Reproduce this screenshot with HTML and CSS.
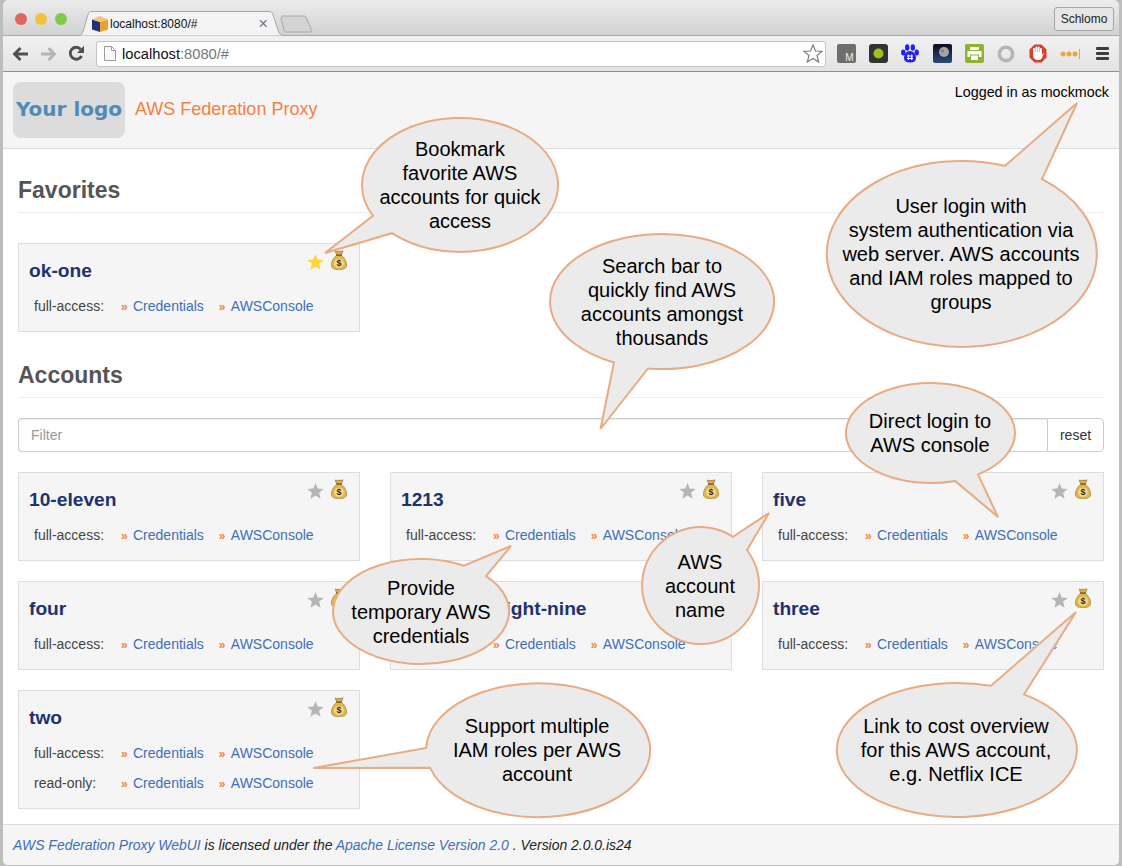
FILE: index.html
```html
<!DOCTYPE html>
<html>

<head>
    <meta charset="UTF-8">
    <title>AWS Federation Proxy</title>
    <link rel="stylesheet" href="styles.css">
</head>

<body>
    <svg class="defs" width="0" height="0">
        <symbol id="star" viewBox="0 0 20 19">
            <polygon points="10,0 12.6,6.6 19.8,7 14.2,11.6 16.1,18.7 10,14.7 3.9,18.7 5.8,11.6 0.2,7 7.4,6.6" />
        </symbol>
        <symbol id="bag" viewBox="0 0 16 20">
            <path d="M4.2 1 C5.6 1.9 6.6 1 8 1.5 C9.4 1 10.6 1.8 12 .8 L10.4 5 L5.6 5 Z" fill="#dcae45" stroke="#8a6a24" stroke-width=".6" />
            <path d="M5.4 5.4 L10.6 5.4 C13.6 8 15.6 11.6 15.6 15 C15.6 18.6 12.6 19.6 8 19.6 C3.4 19.6 .4 18.6 .4 15 C.4 11.6 2.4 8 5.4 5.4 Z" fill="#e3b64c" stroke="#94742a" stroke-width=".6" />
            <rect x="5" y="4.4" width="6" height="1.4" rx=".7" fill="#7a5a1e" />
            <ellipse cx="8" cy="13.2" rx="4.8" ry="4.5" fill="#f0dc94" />
            <text x="8" y="16.4" class="bag-sign">$</text>
        </symbol>
    </svg>

    <div class="window">
        <div class="titlebar">
            <div class="lights">
                <span class="light light-red"></span>
                <span class="light light-yellow"></span>
                <span class="light light-green"></span>
            </div>
            <div class="tab">
                <svg class="tab-shape" width="207" height="25" viewBox="0 0 207 25">
                    <path d="M0 24.5 C4 24.5 4.5 22 5.5 19 L10 3.5 C10.6 1.5 12 .5 14 .5 L191 .5 C193 .5 194.4 1.5 195 3.5 L200 19 C201 22 202 24.5 206.5 24.5" fill="#f3f3f3" stroke="#a6a6a6" />
                </svg>
                <svg class="favicon" width="16" height="16" viewBox="0 0 16 16">
                    <path d="M0 3.5 L8 6 L8 16 L0 13.5 Z" fill="#1f3474" />
                    <path d="M8 6 L16 3.5 L16 13.5 L8 16 Z" fill="#eba02a" />
                    <path d="M0 3.5 L8 0 L16 3.5 L8 6 Z" fill="#f4c27a" />
                </svg>
                <span class="tab-title">localhost:8080/#</span>
                <span class="tab-close">×</span>
            </div>
            <svg class="new-tab" width="33" height="18" viewBox="0 0 33 18">
                <path d="M1 3 C1 1.5 2 1 3 1 L24 1 C25.5 1 26 1.5 26.5 3 L31.5 15 C32 16.5 31 17 30 17 L6 17 C5 17 4.5 16.5 4 15.5 Z" fill="#d3d3d3" stroke="#a9a9a9" />
            </svg>
            <button class="profile">Schlomo</button>
        </div>

        <div class="toolbar">
            <div class="nav">
                <svg class="nav-icon" width="18" height="16" viewBox="0 0 18 16">
                    <path d="M16 8 L3 8 M8.5 2 L2.5 8 L8.5 14" fill="none" stroke="#4f4f4f" stroke-width="2.8" />
                </svg>
                <svg class="nav-icon" width="18" height="16" viewBox="0 0 18 16">
                    <path d="M2 8 L15 8 M9.5 2 L15.5 8 L9.5 14" fill="none" stroke="#b4b4b4" stroke-width="2.8" />
                </svg>
                <svg class="nav-icon" width="17" height="17" viewBox="0 0 17 17">
                    <path d="M13.6 11 A6 6 0 1 1 12.8 4.3" fill="none" stroke="#4f4f4f" stroke-width="2.8" />
                    <polygon points="16,.8 16,8 9,8" fill="#4f4f4f" />
                </svg>
            </div>
            <div class="omnibox">
                <svg class="page-icon" width="12" height="15" viewBox="0 0 12 15">
                    <path d="M.5 .5 L7.5 .5 L11.5 4.5 L11.5 14.5 L.5 14.5 Z M7.5 .5 L7.5 4.5 L11.5 4.5" fill="#fafafa" stroke="#9a9a9a" />
                </svg>
                <span class="url"><span class="url-host">localhost</span>:8080/#</span>
                <svg class="bookmark" width="20" height="19" viewBox="0 0 20 19">
                    <polygon points="10,1 12.5,7 19,7.4 14,11.5 15.7,18 10,14.4 4.3,18 6,11.5 1,7.4 7.5,7" fill="#fff" stroke="#7c7c7c" stroke-width="1.2" />
                </svg>
            </div>
            <div class="extensions">
                <span class="ext">
                    <svg width="19" height="19" viewBox="0 0 19 19">
                        <rect width="19" height="19" rx="2" fill="#6e6e6e" />
                        <text x="12.5" y="17" class="ext-m">M</text>
                    </svg>
                </span>
                <span class="ext">
                    <svg width="19" height="19" viewBox="0 0 19 19">
                        <rect width="19" height="19" rx="3" fill="#333" />
                        <circle cx="9.5" cy="9.5" r="5" fill="#9ac31c" />
                    </svg>
                </span>
                <span class="ext">
                    <svg width="18" height="19" viewBox="0 0 18 19" fill="#2222f0">
                        <ellipse cx="2.3" cy="8.5" rx="2.2" ry="3" />
                        <ellipse cx="6.2" cy="3.5" rx="2.2" ry="3.3" />
                        <ellipse cx="11.8" cy="3.5" rx="2.2" ry="3.3" />
                        <ellipse cx="15.7" cy="8.5" rx="2.2" ry="3" />
                        <path d="M9 7 C12.5 7 15 10.5 15 14 C15 17 13 18.5 9 18.5 C5 18.5 3 17 3 14 C3 10.5 5.5 7 9 7 Z" />
                        <path d="M7.3 10.5 L7.3 16 M10.7 10.5 L10.7 16 M6 12 L12 12 M6 14.5 L12 14.5" stroke="#fff" stroke-width="1.1" />
                    </svg>
                </span>
                <span class="ext">
                    <svg width="19" height="19" viewBox="0 0 19 19">
                        <defs>
                            <linearGradient id="night" x1="0" y1="0" x2="0" y2="1">
                                <stop offset="0" stop-color="#0c0f1c" />
                                <stop offset="1" stop-color="#2b4a7c" />
                            </linearGradient>
                        </defs>
                        <rect width="19" height="19" rx="2" fill="url(#night)" />
                        <circle cx="11" cy="8" r="5" fill="#a5a5a5" />
                        <circle cx="9.5" cy="7" r="1.5" fill="#7d7d7d" />
                    </svg>
                </span>
                <span class="ext">
                    <svg width="19" height="19" viewBox="0 0 19 19">
                        <rect width="19" height="19" rx="2" fill="#8fb230" />
                        <path d="M5 3 L14 3 L14 6 L5 6 Z M2.5 7 L16.5 7 L16.5 13 L14 13 L14 10.5 L5 10.5 L5 13 L2.5 13 Z M6 11.5 L13 11.5 L13 16 L6 16 Z" fill="#fff" />
                    </svg>
                </span>
                <span class="ext">
                    <svg width="18" height="18" viewBox="0 0 18 18">
                        <circle cx="9" cy="9" r="6.7" fill="none" stroke="#b5b5b5" stroke-width="3.6" />
                    </svg>
                </span>
                <span class="ext">
                    <svg width="18" height="19" viewBox="0 0 18 19">
                        <polygon points="5.5,.5 12.5,.5 17.5,5.5 17.5,13.5 12.5,18.5 5.5,18.5 .5,13.5 .5,5.5" fill="#d5402f" />
                        <path d="M5 9 L5 5 M7.3 9 L7.3 3.5 M9.6 9 L9.6 3.5 M11.9 9 L11.9 5" stroke="#fff" stroke-width="1.9" stroke-linecap="round" />
                        <path d="M4.1 8 L12.8 8 L12.8 11 L15 8.7 L13 14 C12.2 15.5 10.8 16 9 16 C6 16 4.1 14 4.1 11.5 Z" fill="#fff" />
                    </svg>
                </span>
                <span class="ext">
                    <svg width="20" height="12" viewBox="0 0 20 12" fill="#e9a83d">
                        <circle cx="3" cy="6" r="2.5" />
                        <circle cx="9" cy="6" r="2.5" />
                        <circle cx="15" cy="6" r="2.5" />
                        <rect x="19" y="1" width="1" height="10" />
                    </svg>
                </span>
                <span class="ext">
                    <svg width="13" height="13" viewBox="0 0 13 13" fill="#3c3c3c">
                        <rect width="13" height="3" rx="1" />
                        <rect y="5" width="13" height="3" rx="1" />
                        <rect y="10" width="13" height="3" rx="1" />
                    </svg>
                </span>
            </div>
        </div>

        <header class="site-header">
            <div class="logo">Your logo</div>
            <div class="site-title">AWS Federation Proxy</div>
            <div class="user">Logged in as mockmock</div>
        </header>

        <main class="content">
            <h2 class="section-title">Favorites</h2>
            <div class="accounts">
                <div class="card">
                    <div class="card-head">
                        <h3 class="card-title">ok-one</h3>
                        <div class="card-icons">
                            <svg class="icon-star on"><use href="#star" /></svg>
                            <svg class="icon-bag"><use href="#bag" /></svg>
                        </div>
                    </div>
                    <div class="role"><span class="role-name">full-access:</span><a class="role-link" href="#">Credentials</a><a class="role-link" href="#">AWSConsole</a></div>
                </div>
            </div>

            <h2 class="section-title second">Accounts</h2>
            <form class="filter">
                <input class="filter-input" type="text" placeholder="Filter">
                <button class="filter-reset" type="button">reset</button>
            </form>
            <div class="accounts">
                <div class="card">
                    <div class="card-head">
                        <h3 class="card-title">10-eleven</h3>
                        <div class="card-icons">
                            <svg class="icon-star"><use href="#star" /></svg>
                            <svg class="icon-bag"><use href="#bag" /></svg>
                        </div>
                    </div>
                    <div class="role"><span class="role-name">full-access:</span><a class="role-link" href="#">Credentials</a><a class="role-link" href="#">AWSConsole</a></div>
                </div>
                <div class="card">
                    <div class="card-head">
                        <h3 class="card-title">1213</h3>
                        <div class="card-icons">
                            <svg class="icon-star"><use href="#star" /></svg>
                            <svg class="icon-bag"><use href="#bag" /></svg>
                        </div>
                    </div>
                    <div class="role"><span class="role-name">full-access:</span><a class="role-link" href="#">Credentials</a><a class="role-link" href="#">AWSConsole</a></div>
                </div>
                <div class="card">
                    <div class="card-head">
                        <h3 class="card-title">five</h3>
                        <div class="card-icons">
                            <svg class="icon-star"><use href="#star" /></svg>
                            <svg class="icon-bag"><use href="#bag" /></svg>
                        </div>
                    </div>
                    <div class="role"><span class="role-name">full-access:</span><a class="role-link" href="#">Credentials</a><a class="role-link" href="#">AWSConsole</a></div>
                </div>
                <div class="card">
                    <div class="card-head">
                        <h3 class="card-title">four</h3>
                        <div class="card-icons">
                            <svg class="icon-star"><use href="#star" /></svg>
                            <svg class="icon-bag"><use href="#bag" /></svg>
                        </div>
                    </div>
                    <div class="role"><span class="role-name">full-access:</span><a class="role-link" href="#">Credentials</a><a class="role-link" href="#">AWSConsole</a></div>
                </div>
                <div class="card">
                    <div class="card-head">
                        <h3 class="card-title">six-seven-eight-nine</h3>
                        <div class="card-icons">
                            <svg class="icon-star"><use href="#star" /></svg>
                            <svg class="icon-bag"><use href="#bag" /></svg>
                        </div>
                    </div>
                    <div class="role"><span class="role-name">full-access:</span><a class="role-link" href="#">Credentials</a><a class="role-link" href="#">AWSConsole</a></div>
                </div>
                <div class="card">
                    <div class="card-head">
                        <h3 class="card-title">three</h3>
                        <div class="card-icons">
                            <svg class="icon-star"><use href="#star" /></svg>
                            <svg class="icon-bag"><use href="#bag" /></svg>
                        </div>
                    </div>
                    <div class="role"><span class="role-name">full-access:</span><a class="role-link" href="#">Credentials</a><a class="role-link" href="#">AWSConsole</a></div>
                </div>
                <div class="card">
                    <div class="card-head">
                        <h3 class="card-title">two</h3>
                        <div class="card-icons">
                            <svg class="icon-star"><use href="#star" /></svg>
                            <svg class="icon-bag"><use href="#bag" /></svg>
                        </div>
                    </div>
                    <div class="role"><span class="role-name">full-access:</span><a class="role-link" href="#">Credentials</a><a class="role-link" href="#">AWSConsole</a></div>
                    <div class="role"><span class="role-name">read-only:</span><a class="role-link" href="#">Credentials</a><a class="role-link" href="#">AWSConsole</a></div>
                </div>
            </div>
        </main>

        <footer class="site-footer">
            <a href="#">AWS Federation Proxy WebUI</a> is licensed under the <a href="#">Apache License Version 2.0</a> . Version 2.0.0.is24
        </footer>
    </div>

    <!-- callouts on top of the screenshot -->
    <svg class="callouts" width="1122" height="866" viewBox="0 0 1122 866">
        <path class="bubble" d="M373 215.8 A98 67 0 1 1 392 233.2 L325 253 Z" />
        <text class="bubble-text" x="460" y="156">Bookmark</text>
        <text class="bubble-text" x="460" y="180">favorite AWS</text>
        <text class="bubble-text" x="460" y="204">accounts for quick</text>
        <text class="bubble-text" x="460" y="228">access</text>

        <path class="bubble" d="M614 362.5 A112 67.5 0 1 1 648 368.5 L600.5 429 Z" />
        <text class="bubble-text" x="662" y="273">Search bar to</text>
        <text class="bubble-text" x="662" y="297">quickly find AWS</text>
        <text class="bubble-text" x="662" y="321">accounts amongst</text>
        <text class="bubble-text" x="662" y="345">thousands</text>

        <path class="bubble" d="M1042 179.1 A135 93 0 1 1 1005 165.8 L1077 103 Z" />
        <text class="bubble-text" x="961" y="213">User login with</text>
        <text class="bubble-text" x="961" y="237">system authentication via</text>
        <text class="bubble-text" x="961" y="261">web server. AWS accounts</text>
        <text class="bubble-text" x="961" y="285">and IAM roles mapped to</text>
        <text class="bubble-text" x="961" y="309">groups</text>

        <path class="bubble" d="M955 480.9 A84.5 50 0 1 1 978 474.4 L998 517 Z" />
        <text class="bubble-text" x="930" y="428">Direct login to</text>
        <text class="bubble-text" x="930" y="452">AWS console</text>

        <path class="bubble" d="M486 576.1 A88 52.5 0 1 1 464 565.7 L511 546 Z" />
        <text class="bubble-text" x="421" y="595">Provide</text>
        <text class="bubble-text" x="421" y="619">temporary AWS</text>
        <text class="bubble-text" x="421" y="643">credentials</text>

        <path class="bubble" d="M747 550 A58.5 58.5 0 1 1 733 536.9 L769 513 Z" />
        <text class="bubble-text" x="700" y="569">AWS</text>
        <text class="bubble-text" x="700" y="593">account</text>
        <text class="bubble-text" x="700" y="617">name</text>

        <path class="bubble" d="M1024 694.4 A120 67 0 1 1 991 685.7 L1076 612 Z" />
        <text class="bubble-text" x="956" y="733">Link to cost overview</text>
        <text class="bubble-text" x="956" y="757">for this AWS account,</text>
        <text class="bubble-text" x="956" y="781">e.g. Netflix ICE</text>

        <path class="bubble" d="M426.2 748 A112 67 0 1 1 430 767.7 L313.5 768 Z" />
        <text class="bubble-text" x="537" y="733">Support multiple</text>
        <text class="bubble-text" x="537" y="757">IAM roles per AWS</text>
        <text class="bubble-text" x="537" y="781">account</text>
    </svg>
</body>

</html>
```

FILE: styles.css
```css
* {
    box-sizing: border-box;
}

html,
body {
    margin: 0;
    padding: 0;
    height: 100%;
    overflow: hidden;
    background-color: #bdbdbd;
    font-family: "Liberation Sans", Arial, sans-serif;
}

.defs {
    display: block;
    height: 0;
}

.window {
    display: flex;
    flex-direction: column;
    height: 865px;
    margin: 0 3px;
    background-color: #fff;
    border-radius: 6px 6px 5px 5px;
    overflow: hidden;
}

/* browser frame */
.titlebar {
    display: flex;
    align-items: flex-end;
    height: 36px;
    margin: 0 -3px;
    padding-left: 12px;
    background: linear-gradient(#ececec, #d2d2d2);
    border-bottom: 1px solid #a8a8a8;
    border-radius: 6px 6px 0 0;
}

.lights {
    display: flex;
    align-self: flex-start;
    gap: 8px;
    width: 66px;
    margin-top: 13px;
    padding-left: 3px;
}

.light {
    width: 12px;
    height: 12px;
    border-radius: 50%;
}

.light-red {
    background-color: #e0655c;
}

.light-yellow {
    background-color: #f1c33b;
}

.light-green {
    background-color: #7ecb4a;
}

.tab {
    display: flex;
    align-items: center;
    position: relative;
    width: 205px;
    height: 25px;
    margin-bottom: -1px;
    padding-left: 14px;
}

.tab-shape {
    position: absolute;
    top: 0;
    left: 0;
}

.favicon {
    position: relative;
    flex: none;
}

.tab-title {
    position: relative;
    margin-left: 2px;
    font-size: 12px;
    color: #111;
}

.tab-close {
    position: relative;
    margin-left: 61px;
    font-size: 16px;
    color: #777;
}

.new-tab {
    margin: 0 0 2px -3px;
}

.profile {
    align-self: flex-start;
    width: 60px;
    height: 24px;
    margin: 7px 8px 0 auto;
    padding: 0;
    background-color: #e6e6e6;
    border: 1px solid #a6a6a6;
    border-radius: 3px;
    font-family: "Liberation Sans", Arial, sans-serif;
    font-size: 12px;
    color: #222;
}

.toolbar {
    display: flex;
    align-items: center;
    height: 36px;
    margin: 0 -3px;
    background: linear-gradient(#f1f1f1, #e3e3e3);
    border-bottom: 1px solid #8f8f8f;
}

.nav {
    display: flex;
    align-items: center;
    width: 96px;
    padding-left: 12px;
    gap: 9px;
}

.nav-icon:last-child {
    margin-left: 2px;
}

.omnibox {
    display: flex;
    align-items: center;
    width: 730px;
    height: 26px;
    padding: 0 2px 0 7px;
    background-color: #fff;
    border: 1px solid #c4c4c4;
    border-radius: 3px;
}

.page-icon {
    flex: none;
}

.url {
    margin-left: 6px;
    font-size: 14.7px;
    color: #777;
}

.url-host {
    color: #111;
}

.bookmark {
    margin-left: auto;
}

.extensions {
    display: flex;
    margin-left: 4px;
}

.ext {
    display: flex;
    align-items: center;
    justify-content: center;
    width: 32px;
    height: 20px;
}

.ext-m {
    font-size: 10px;
    fill: #eee;
    text-anchor: middle;
}

/* page */
.site-header {
    display: flex;
    flex: none;
    height: 77px;
    padding: 10px 10px 0 10px;
    background-color: #f5f5f5;
    border-bottom: 1px solid #ddd;
}

.logo {
    width: 112px;
    height: 56px;
    background-color: #dcdcdc;
    border-radius: 8px;
    font-family: "DejaVu Sans", sans-serif;
    font-size: 20px;
    font-weight: bold;
    line-height: 54px;
    text-align: center;
    color: #4f8abb;
}

.site-title {
    margin-left: 10px;
    font-size: 18px;
    line-height: 54px;
    color: #f5803e;
}

.user {
    margin-left: auto;
    font-size: 14.3px;
    line-height: 20px;
    color: #000;
}

.content {
    flex: 1;
    padding: 27px 15px 0 15px;
}

.section-title {
    margin: 0;
    padding-bottom: 8px;
    border-bottom: 1px solid #eee;
    font-size: 23px;
    line-height: 28px;
    font-weight: bold;
    color: #555;
}

.section-title.second {
    margin-top: 29px;
}

.section-title + .accounts {
    margin-top: 30px;
}

.filter {
    display: flex;
    height: 34px;
    margin: 20px 0;
}

.filter-input {
    flex: 1;
    padding: 0 12px;
    border: 1px solid #ccc;
    border-right: none;
    border-radius: 4px 0 0 4px;
    box-shadow: inset 0 1px 1px rgba(0, 0, 0, .075);
    font-family: "Liberation Sans", Arial, sans-serif;
    font-size: 14px;
}

.filter-input::placeholder {
    color: #999;
}

.filter-reset {
    width: 57px;
    padding: 0;
    background-color: #fff;
    border: 1px solid #ccc;
    border-radius: 0 4px 4px 0;
    font-family: "Liberation Sans", Arial, sans-serif;
    font-size: 14px;
    color: #333;
}

.accounts {
    display: grid;
    grid-template-columns: repeat(3, 342px);
    gap: 20px 30px;
}

.card {
    padding: 0 12px 10px 10px;
    background-color: #f5f5f5;
    border: 1px solid #ddd;
}

.card-head {
    display: flex;
    justify-content: space-between;
    height: 47px;
}

.card-title {
    margin: 11px 0 0 0;
    font-size: 19.2px;
    line-height: 32px;
    font-weight: bold;
    color: #1d3270;
}

.card-icons {
    display: flex;
    align-items: flex-end;
    gap: 7px;
    height: 26px;
}

.icon-star {
    width: 17px;
    height: 16px;
    fill: #b5b5b5;
}

.icon-star.on {
    fill: #fdd63a;
}

.icon-bag {
    width: 16px;
    height: 20px;
}

.bag-sign {
    font-size: 9px;
    font-weight: bold;
    fill: #2f2a1a;
    text-anchor: middle;
}

.role {
    display: flex;
    height: 30px;
    padding-left: 5px;
    font-size: 14px;
    line-height: 30px;
    color: #444;
}

.role-name {
    width: 87px;
}

.role-link {
    margin-right: 15px;
    color: #3f6fb8;
    text-decoration: none;
}

.role-link::before {
    content: "»";
    display: inline-block;
    width: 12px;
    font-size: 12px;
    line-height: 1;
    font-weight: bold;
    color: #f5803e;
}

.site-footer {
    flex: none;
    height: 41px;
    padding-left: 10px;
    background-color: #f5f5f5;
    border-top: 1px solid #ddd;
    font-size: 13.95px;
    font-style: italic;
    line-height: 40px;
    color: #222;
}

.site-footer a {
    color: #3f6fb8;
    text-decoration: none;
}

/* callouts */
.callouts {
    position: absolute;
    top: 0;
    left: 0;
    pointer-events: none;
}

.bubble {
    fill: #ebebeb;
    stroke: #e8ab82;
    stroke-width: 2;
}

.bubble-text {
    font-size: 20px;
    text-anchor: middle;
    fill: #000;
}
```
